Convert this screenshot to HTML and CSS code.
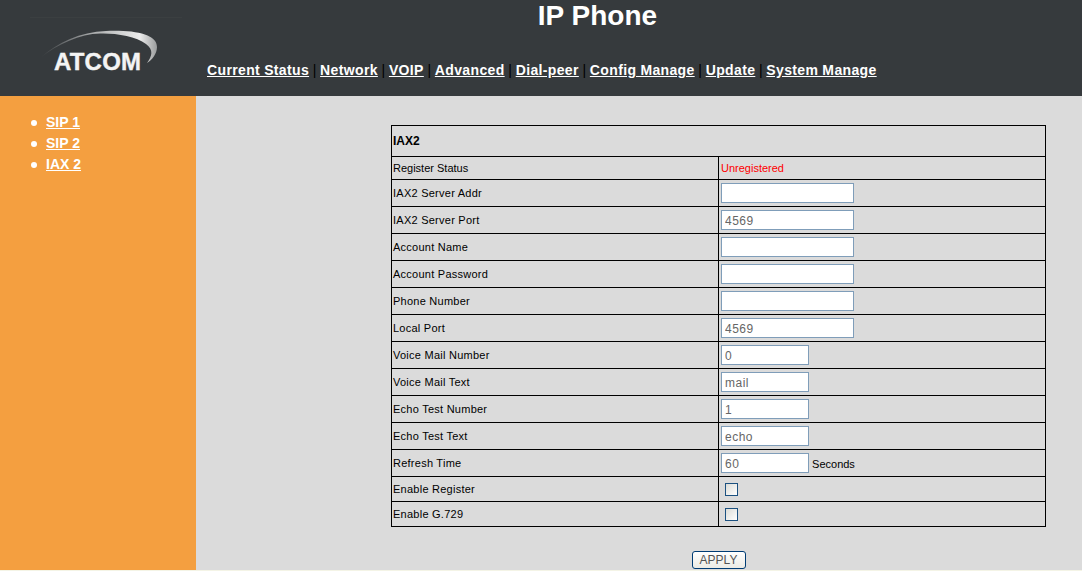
FILE: index.html
```html
<!DOCTYPE html>
<html lang="en">
<head>
  <meta charset="UTF-8">
  <meta name="viewport" content="width=device-width, initial-scale=1.0">
  <title>IP Phone</title>
  <link rel="stylesheet" href="styles.css">
</head>
<body>
  <div class="header">
    <div class="logo">
      <div class="logo-rule"></div>
      <svg class="logo-img" width="130" height="50" viewBox="0 0 130 50">
        <defs>
          <linearGradient id="swoosh" x1="0" y1="0" x2="1" y2="0">
            <stop offset="0" stop-color="#363a3d"/>
            <stop offset="0.45" stop-color="#a9abac"/>
            <stop offset="0.85" stop-color="#ececec"/>
            <stop offset="1" stop-color="#9a9c9d"/>
          </linearGradient>
        </defs>
        <path d="M0 28 C18 12 40 2 66 1 C95 0 117 4 117 17 C117 24 112 30 107 33 C112 26 114 20 106 14 C96 6 75 3 60 3.5 C40 4 18 14 0 28 Z" fill="url(#swoosh)"/>
        <text class="logo-text" x="14" y="39.5">ATCOM</text>
      </svg>
    </div>
    <div class="header-right">
      <h1 class="title">IP Phone</h1>
      <div class="nav">
        <a href="#">Current Status</a> | <a href="#">Network</a> | <a href="#">VOIP</a> | <a href="#">Advanced</a> | <a href="#">Dial-peer</a> | <a href="#">Config Manage</a> | <a href="#">Update</a> | <a href="#">System Manage</a>
      </div>
    </div>
  </div>
  <div class="page">
    <div class="sidebar">
      <ul class="side-menu">
        <li><a href="#">SIP 1</a></li>
        <li><a href="#">SIP 2</a></li>
        <li><a href="#">IAX 2</a></li>
      </ul>
    </div>
    <div class="main">
      <form>
        <table class="settings">
          <tr class="row-head"><th colspan="2">IAX2</th></tr>
          <tr class="row-status"><td class="label">Register Status</td><td class="unreg">Unregistered</td></tr>
          <tr><td class="label">IAX2 Server Addr</td><td><input type="text" class="long"></td></tr>
          <tr><td class="label">IAX2 Server Port</td><td><input type="text" class="long" value="4569"></td></tr>
          <tr><td class="label">Account Name</td><td><input type="text" class="long"></td></tr>
          <tr><td class="label">Account Password</td><td><input type="text" class="long"></td></tr>
          <tr><td class="label">Phone Number</td><td><input type="text" class="long"></td></tr>
          <tr><td class="label">Local Port</td><td><input type="text" class="long" value="4569"></td></tr>
          <tr><td class="label">Voice Mail Number</td><td><input type="text" class="short" value="0"></td></tr>
          <tr><td class="label">Voice Mail Text</td><td><input type="text" class="short" value="mail"></td></tr>
          <tr><td class="label">Echo Test Number</td><td><input type="text" class="short" value="1"></td></tr>
          <tr><td class="label">Echo Test Text</td><td><input type="text" class="short" value="echo"></td></tr>
          <tr><td class="label">Refresh Time</td><td><input type="text" class="short" value="60"> <span class="unit">Seconds</span></td></tr>
          <tr class="row-check"><td class="label">Enable Register</td><td><span class="check"></span></td></tr>
          <tr class="row-check"><td class="label">Enable G.729</td><td><span class="check"></span></td></tr>
        </table>
        <div class="actions"><button type="button" class="apply">APPLY</button></div>
      </form>
    </div>
  </div>
</body>
</html>
```

FILE: styles.css
```css
html, body {
  height: 571px;
  overflow: hidden;
}
body {
  background-color: #f4f4e6;
  font-family: "Liberation Sans", Arial, sans-serif;
  margin: 0;
  padding: 0;
}
.header {
  display: flex;
  height: 96px;
  background-color: #363a3d;
}
.logo {
  width: 196px;
  flex-shrink: 0;
  padding: 17px 0 0 30px;
  box-sizing: border-box;
}
.logo-rule {
  width: 152px;
  height: 1px;
  background-color: #3b3f41;
}
.logo-img {
  display: block;
  margin: 12px 0 0 10px;
}
.logo-text {
  font-family: "Liberation Sans", Arial, sans-serif;
  font-size: 24px;
  font-weight: bold;
  letter-spacing: 0.2px;
  fill: #f4f4f4;
  stroke: #f4f4f4;
  stroke-width: 0.4px;
}
.header-right {
  flex: 1;
  padding-left: 11px;
}
.title {
  width: 781px;
  margin: 0;
  color: white;
  font-size: 28px;
  line-height: 32px;
  font-weight: bold;
  text-align: center;
}
.nav {
  margin-top: 29px;
  color: black;
  font-size: 14px;
  line-height: 18px;
  font-weight: normal;
  word-spacing: -0.2px;
  white-space: nowrap;
}
.nav a {
  color: white;
  font-weight: bold;
  letter-spacing: 0.36px;
}
.page {
  display: flex;
  height: 474px;
}
.sidebar {
  width: 196px;
  flex-shrink: 0;
  background-color: #f49f40;
}
.side-menu {
  margin: 16px 0 0;
  padding: 0 0 0 31px;
  list-style: none;
  font-size: 14px;
}
.side-menu li {
  display: flex;
  align-items: center;
  gap: 9px;
  height: 21px;
  line-height: 21px;
}
.side-menu li::before {
  content: "";
  width: 6px;
  height: 6px;
  border-radius: 50%;
  background-color: white;
}
.side-menu a {
  color: white;
  font-weight: bold;
}
.main {
  flex: 1;
  background-color: #dbdbdb;
  padding: 29px 0 0 195px;
}
.settings {
  width: 655px;
  border-collapse: collapse;
  table-layout: fixed;
  font-size: 11px;
  color: black;
}
.settings th, .settings td {
  border: 1px solid black;
  padding: 0 2px;
  height: 27px;
  box-sizing: border-box;
  text-align: left;
  font-weight: normal;
}
.settings th {
  padding-left: 1px;
  font-weight: bold;
  font-size: 12px;
}
.settings .row-head th {
  height: 31px;
}
.settings .row-status td {
  height: 23px;
}
.settings .row-check td {
  height: 25px;
}
.settings .label {
  width: 327px;
  padding-left: 1px;
  letter-spacing: 0.25px;
}
.settings .row-status .label {
  letter-spacing: 0;
}
.unreg {
  color: red;
}
input[type="text"] {
  height: 20px;
  padding: 1px 3px 0;
  border: 1px solid #7f9db9;
  background: white;
  color: #666;
  font-family: "Liberation Sans", Arial, sans-serif;
  font-size: 12px;
  letter-spacing: 0.5px;
  box-sizing: border-box;
  vertical-align: middle;
  margin: 0;
}
.long {
  width: 133px;
}
.short {
  width: 88px;
}
.unit {
  vertical-align: -2px;
}
.check {
  display: block;
  width: 13px;
  height: 13px;
  margin-left: 4px;
  border: 1px solid #1c5180;
  box-sizing: border-box;
  background: linear-gradient(135deg, #dcdcd7, #ffffff);
}
.actions {
  margin-top: 23px;
  text-align: center;
  width: 655px;
}
.apply {
  display: inline-block;
  width: 54px;
  height: 18px;
  padding: 0;
  border: 1px solid #003c74;
  border-radius: 3px;
  background: linear-gradient(#ffffff, #ecebe5);
  color: #555;
  font-family: "Liberation Sans", Arial, sans-serif;
  font-size: 12px;
}
```
